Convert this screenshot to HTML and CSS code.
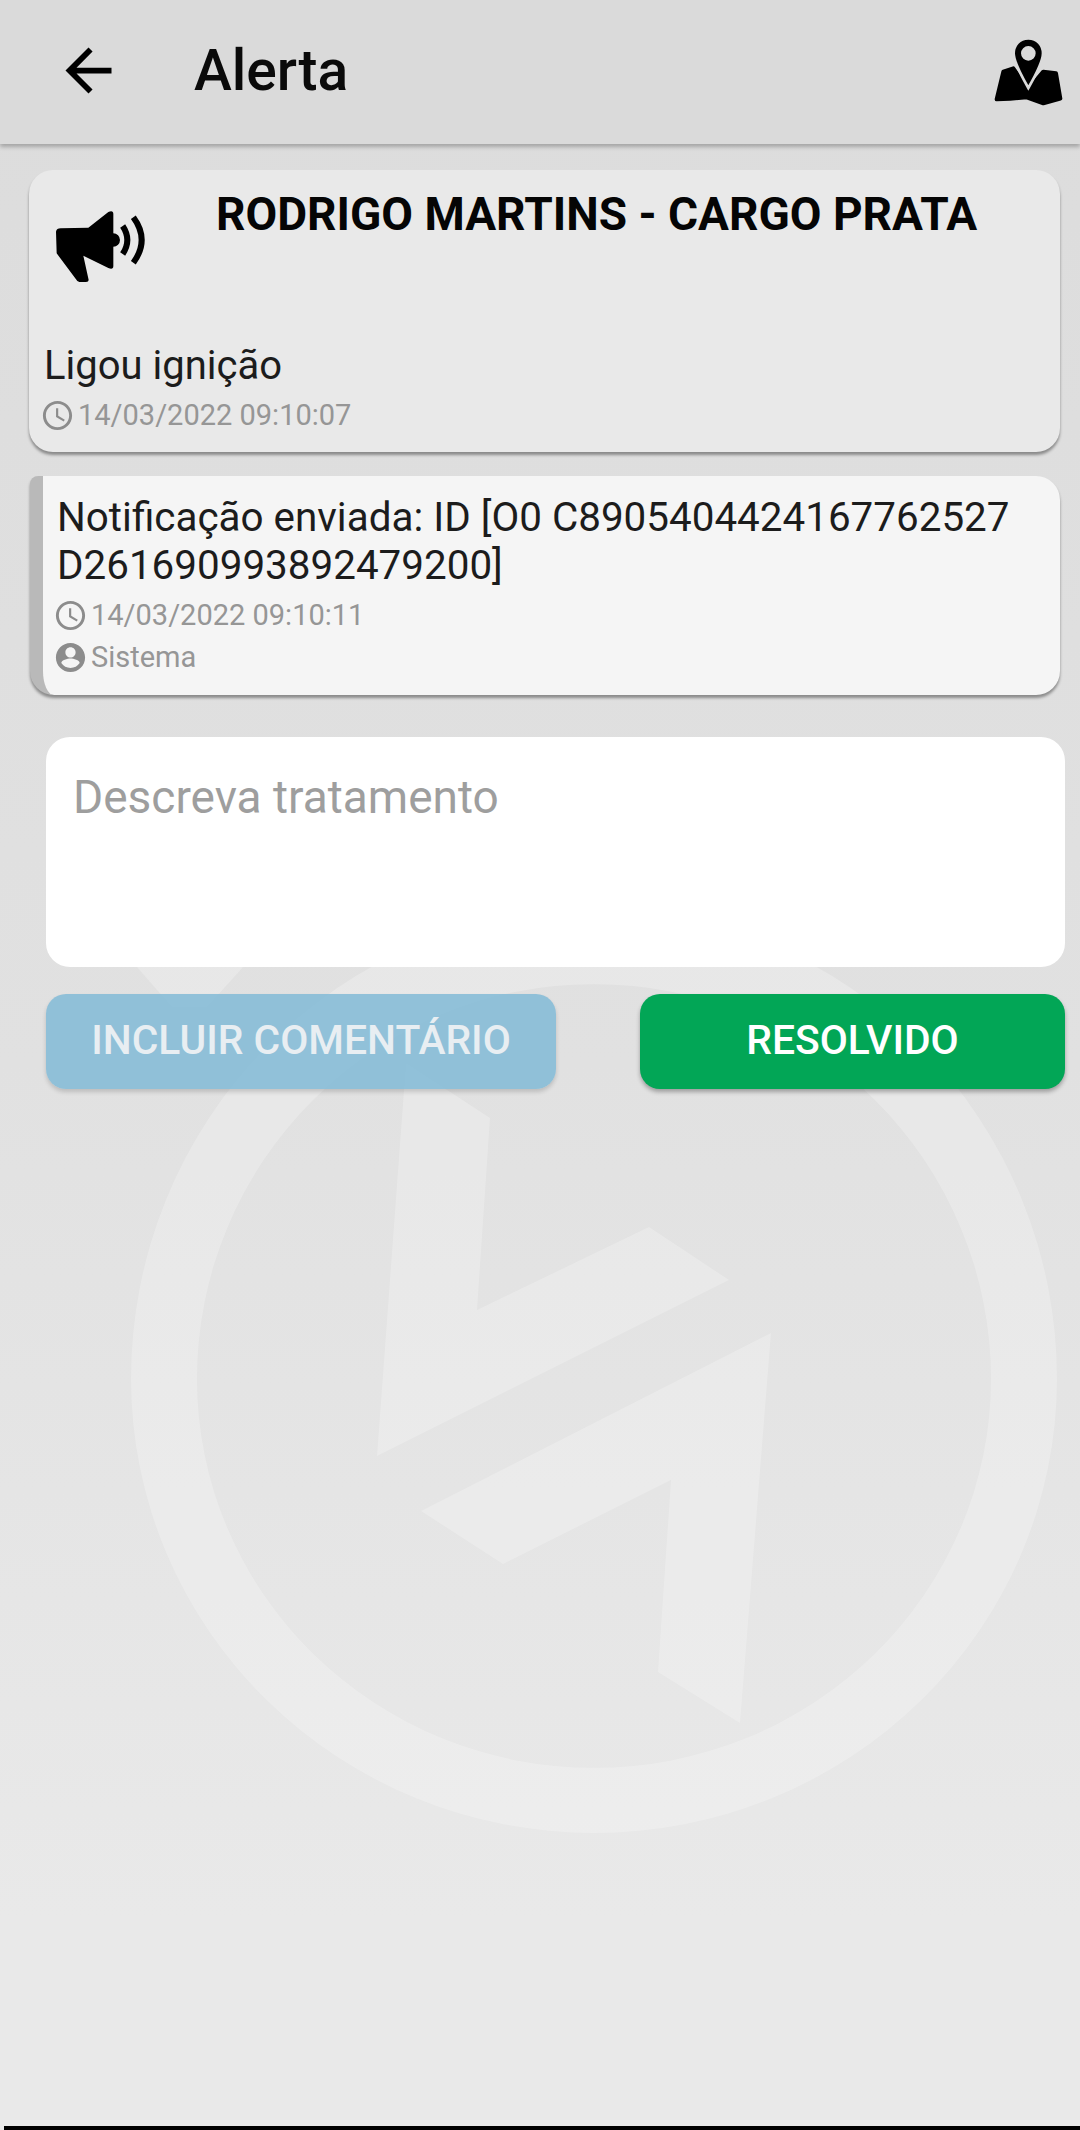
FILE: index.html
```html
<!DOCTYPE html>
<html lang="pt-BR">
<head>
	<meta charset="utf-8">
	<title>Alerta</title>
	<link rel="stylesheet" href="styles.css">
</head>
<body>
	<svg class="watermark" viewBox="0 0 1080 2130" width="1080" height="2130">
		<path fill-rule="evenodd" d="M131 1379A463 470 0 0 1 1057 1379A463 454 0 0 1 131 1379ZM197 1379A397 395 0 0 1 991 1379A397 389 0 0 1 197 1379Z"/>
		<path d="M137 967H243L207 1007H172Z"/>
		<path d="M406 1063L490 1118 477 1310 649 1227 729 1280 377 1456Z"/>
		<path d="M771 1333L740 1723 658 1672 671 1480 503 1564 421 1511Z"/>
	</svg>

	<header class="topbar">
		<svg class="back" viewBox="0 0 24 24" width="69" height="69"><path d="M20 11H7.83l5.59-5.59L12 4l-8 8 8 8 1.41-1.41L7.83 13H20v-2z"/></svg>
		<h1>Alerta</h1>
		<svg class="map" viewBox="0 0 270 270" width="90" height="90">
			<path class="land" d="M50 220L70 137 100 127 145 190 190 137 228 142 241 218 190 232 140 214 90 218Z"/>
			<path class="pin" fill-rule="evenodd" d="M145 37C118 37 101 58 101 82 101 108 130 160 145 186 160 160 189 108 189 82 189 58 172 37 145 37ZM145 64A18 18 0 1 1 145 100 18 18 0 1 1 145 64Z"/>
		</svg>
	</header>

	<main class="content">
		<section class="card alert">
			<div class="alert-head">
				<svg class="horn" viewBox="0 0 360 300" width="120" height="100">
					<path d="M48 125Q50 115 62 115L145 113 205 66Q220 60 220 72V130A20 20 0 0 1 220 170V228Q220 240 205 234L130 197 146 270Q146 276 138 276H118Q112 276 108 268L50 190Z"/>
					<path class="wave" d="M248 108Q276 150 248 192"/>
					<path class="wave" d="M280 82Q330 150 280 218"/>
				</svg>
				<h2>RODRIGO MARTINS - CARGO PRATA</h2>
			</div>
			<p class="msg">Ligou ignição</p>
			<p class="meta">
				<svg viewBox="0 0 24 24" width="35" height="35"><path d="M11.99 2C6.47 2 2 6.48 2 12s4.47 10 9.99 10C17.52 22 22 17.52 22 12S17.52 2 11.99 2zM12 20c-4.42 0-8-3.58-8-8s3.58-8 8-8 8 3.58 8 8-3.58 8-8 8zm.5-13H11v6l5.25 3.15.75-1.23-4.5-2.67z"/></svg>
				14/03/2022 09:10:07
			</p>
		</section>

		<section class="card note">
			<p class="msg">Notificação enviada: ID [O0 C8905404424167762527 D261690993892479200]</p>
			<p class="meta">
				<svg viewBox="0 0 24 24" width="35" height="35"><path d="M11.99 2C6.47 2 2 6.48 2 12s4.47 10 9.99 10C17.52 22 22 17.52 22 12S17.52 2 11.99 2zM12 20c-4.42 0-8-3.58-8-8s3.58-8 8-8 8 3.58 8 8-3.58 8-8 8zm.5-13H11v6l5.25 3.15.75-1.23-4.5-2.67z"/></svg>
				14/03/2022 09:10:11
			</p>
			<p class="meta">
				<svg viewBox="0 0 24 24" width="35" height="35"><path d="M12 2C6.48 2 2 6.48 2 12s4.48 10 10 10 10-4.48 10-10S17.52 2 12 2zm0 3c1.93 0 3.5 1.57 3.5 3.5S13.93 12 12 12s-3.500-1.570-3.500-3.500S10.070 5 12 5zm0 14.200c-2.600 0-4.900-1.300-6.300-3.400.03-2 4.200-3.100 6.300-3.100s6.270 1.100 6.300 3.100c-1.400 2.100-3.700 3.400-6.300 3.400z"/></svg>
				Sistema
			</p>
		</section>

		<div class="field">Descreva tratamento</div>

		<div class="actions">
			<button type="button" class="btn btn-off">INCLUIR COMENTÁRIO</button>
			<button type="button" class="btn btn-ok">RESOLVIDO</button>
		</div>
	</main>

	<div class="navline"></div>
</body>
</html>
```

FILE: styles.css
```css
* {
	box-sizing: border-box;
}

html, body {
	margin: 0;
	padding: 0;
}

body {
	position: relative;
	width: 1080px;
	height: 2130px;
	overflow: hidden;
	font-family: Roboto, "Liberation Sans", sans-serif;
	color: #1c1c1c;
	background: linear-gradient(#dcdcdc, #e1e1e1 50%, #e9e9e9 90%);
}

.watermark {
	position: absolute;
	left: 0;
	top: 0;
	fill: rgba(255,255,255,0.23);
}

.topbar {
	position: relative;
	display: flex;
	align-items: center;
	height: 144px;
	padding: 0 10px 0 54px;
	background: #dadada;
	box-shadow: 0 3px 4px rgba(0,0,0,0.25);
}

	.topbar h1 {
		flex: 1;
		margin: -4px 0 0 71px;
		font-size: 57px;
		font-weight: 500;
		color: #0a0a0a;
	}

.back {
	margin-top: -4px;
}

.map {
	margin-bottom: 3px;
}

.land {
	fill: #000;
	stroke: #000;
	stroke-width: 12;
	stroke-linejoin: round;
}

.pin {
	fill: #000;
	stroke: #dadada;
	stroke-width: 8;
}

.content {
	position: relative;
	padding: 26px 15px 0 29px;
}

.card {
	margin-right: 5px;
	border-radius: 24px;
	box-shadow: 0 3px 3px rgba(0,0,0,0.38);
}

.alert {
	height: 282px;
	padding: 20px 15px 0 15px;
	background: #e9e9e9;
}

.alert-head {
	display: flex;
	height: 100px;
	margin-left: -4px;
	margin-bottom: 52px;
}

	.alert-head h2 {
		margin: -3px 0 0 56px;
		font-size: 46px;
		font-weight: 700;
		line-height: 54px;
		white-space: nowrap;
		color: #050505;
	}

.wave {
	fill: none;
	stroke: #000;
	stroke-width: 18;
}

.msg {
	margin: 0;
	font-size: 40px;
	line-height: 48px;
}

.meta {
	display: flex;
	align-items: center;
	gap: 3px;
	margin: 0;
	height: 42px;
	font-size: 29px;
	color: #969696;
	fill: #8c8c8c;
}

	.meta svg {
		margin-left: -4px;
	}

.alert .meta {
	margin-top: 4px;
}

.note {
	height: 219px;
	margin-top: 24px;
	margin-left: 1px;
	padding: 18px 15px 0 14px;
	background: #f5f5f5;
	border-left: 13px solid #b9b9b9;
	border-top-left-radius: 8px;
}

	.note .msg {
		margin-bottom: 4px;
		font-size: 40.4px;
	}

.field {
	height: 230px;
	margin: 42px 0 0 17px;
	padding: 36px 27px;
	border-radius: 24px;
	background: #fff;
	font-size: 46px;
	line-height: 48px;
	color: #9e9e9e;
}

.actions {
	display: flex;
	justify-content: space-between;
	margin: 27px 0 0 17px;
}

.btn {
	height: 95px;
	padding: 0 0 3px;
	border: 0;
	border-radius: 20px;
	font-family: inherit;
	font-size: 40.8px;
	font-weight: 500;
	box-shadow: 0 3px 4px rgba(0,0,0,0.3);
}

.btn-off {
	width: 510px;
	color: #e8eef2;
	background: rgba(129,186,214,0.85);
	box-shadow: 0 3px 4px rgba(0,0,0,0.16);
}

.btn-ok {
	width: 425px;
	color: #fff;
	background: #02a656;
}

.navline {
	position: absolute;
	left: 4px;
	right: 0;
	bottom: 0;
	height: 4px;
	background: #000;
}
```
